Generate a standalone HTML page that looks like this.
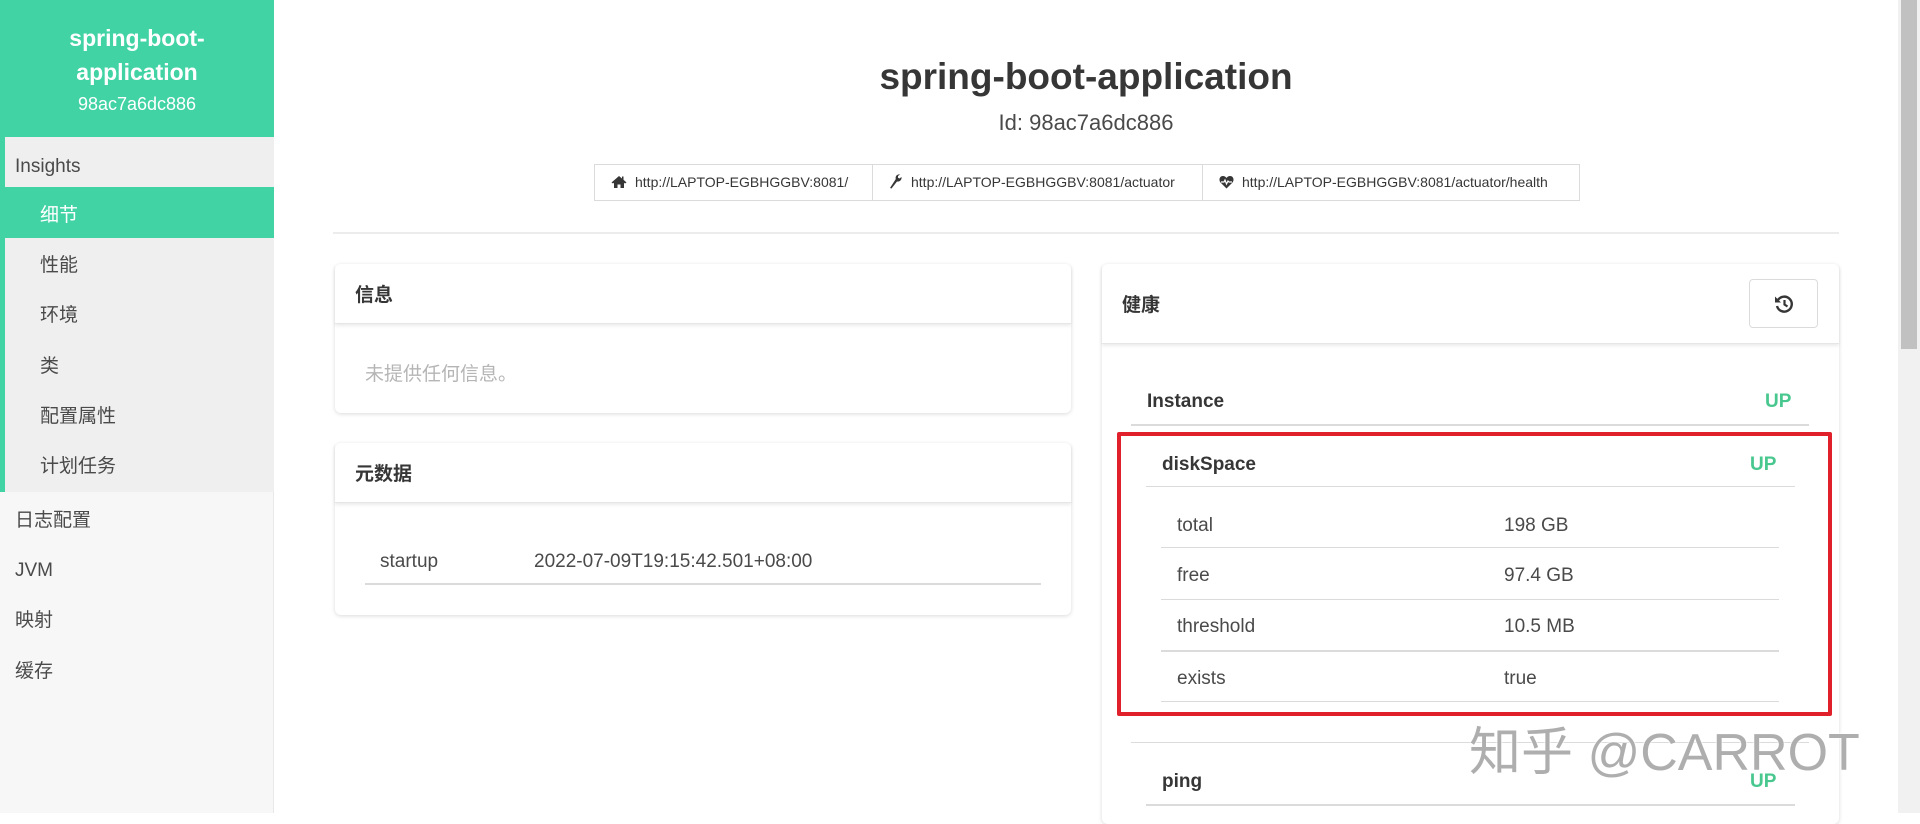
<!DOCTYPE html>
<html><head><meta charset="utf-8"><style>
*{margin:0;padding:0;box-sizing:border-box}
body{width:1920px;height:813px;overflow:hidden;background:#fff;font-family:"Liberation Sans","Noto Sans CJK SC",sans-serif;color:#363636;position:relative}
.a{position:absolute}
.sb{left:0;top:0;width:274px;height:813px;background:#f7f7f7;border-right:1px solid #e8e8e8}
.hd{left:0;top:0;width:274px;height:137px;background:#42d3a5;color:#fff;text-align:center}
.nav{font-size:19px;color:#4a4a4a;line-height:50px}
.card{background:#fff;border-radius:6px;box-shadow:0 1px 4px rgba(10,10,10,.15)}
.ch{border-bottom:1px solid #e6e6e6;box-shadow:0 2px 3px rgba(10,10,10,.08);font-weight:bold;font-size:19px;color:#363636}
.ln{height:1px;background:#dbdbdb}
.t{font-size:19px;color:#4a4a4a}
.up{color:#48c78e;font-weight:bold;font-size:19px}
.btn{top:164px;height:37px;border:1px solid #dbdbdb;font-size:14px;color:#363636;line-height:35px;padding-left:16px;background:#fff}
.btn svg{vertical-align:-2px;margin-right:8px}
</style></head><body>
<div class="a sb"></div>
<div class="a hd">
 <div class="a" style="left:0;width:274px;top:21px;font-size:23px;font-weight:bold;line-height:34px">spring-boot-<br>application</div>
 <div class="a" style="left:0;width:274px;top:94px;font-size:18px">98ac7a6dc886</div>
</div>
<div class="a" style="left:0;top:137px;width:274px;height:355px;background:#efefef"></div>
<div class="a" style="left:0;top:137px;width:5px;height:355px;background:#42d3a5"></div>
<div class="a" style="left:0;top:187px;width:274px;height:51px;background:#42d3a5"></div>
<div class="a nav" style="left:15px;top:142px">Insights</div>
<div class="a nav" style="left:40px;top:191px;color:#fff">细节</div>
<div class="a nav" style="left:40px;top:241px">性能</div>
<div class="a nav" style="left:40px;top:291px">环境</div>
<div class="a nav" style="left:40px;top:342px">类</div>
<div class="a nav" style="left:40px;top:392px">配置属性</div>
<div class="a nav" style="left:40px;top:442px">计划任务</div>
<div class="a nav" style="left:15px;top:496px">日志配置</div>
<div class="a nav" style="left:15px;top:546px">JVM</div>
<div class="a nav" style="left:15px;top:596px">映射</div>
<div class="a nav" style="left:15px;top:647px">缓存</div>

<div class="a" style="left:274px;width:1624px;top:56px;text-align:center;font-size:37px;font-weight:bold;color:#363636">spring-boot-application</div>
<div class="a" style="left:274px;width:1624px;top:110px;text-align:center;font-size:22px;color:#4a4a4a">Id: 98ac7a6dc886</div>

<div class="a btn" style="left:594px;width:279px"><svg width="16" height="14" viewBox="0 0 16 14"><path d="M8 1 L0.5 7.5 L2 8.5 L3 7.7 V13 H6.5 V9.5 H9.5 V13 H13 V7.7 L14 8.5 L15.5 7.5 L12.5 4.8 V1.5 H11 V3.5 Z" fill="#363636"/></svg>http://LAPTOP-EGBHGGBV:8081/</div>
<div class="a btn" style="left:872px;width:331px"><svg width="14" height="15" viewBox="0 0 14 15"><path d="M1 14 L2.5 14.5 L8 7.5 C10.5 8 13 6 12.5 3 L10.5 4.5 L9 3.8 L9 2 L11 0.5 C8 0 6 2.5 6.8 5 Z" fill="#363636"/></svg>http://LAPTOP-EGBHGGBV:8081/actuator</div>
<div class="a btn" style="left:1202px;width:378px"><svg width="15" height="14" viewBox="0 0 15 14"><path d="M7.5 13.5 L1.5 7.5 C-0.5 5 0.5 1 4 1 C5.6 1 6.8 2 7.5 3 C8.2 2 9.4 1 11 1 C14.5 1 15.5 5 13.5 7.5 Z" fill="#363636"/><path d="M2 7 H5 L6 5 L7.5 9 L9 6 L10 7 H13" stroke="#fff" stroke-width="1.2" fill="none"/></svg>http://LAPTOP-EGBHGGBV:8081/actuator/health</div>
<div class="a ln" style="left:333px;top:232px;width:1506px;background:#ececec;height:2px"></div>

<div class="a card" style="left:335px;top:264px;width:736px;height:149px">
 <div class="ch" style="height:60px;line-height:64px;padding-left:20px">信息</div>
 <div class="a" style="left:30px;top:95px;font-size:19px;color:#b5b5b5">未提供任何信息。</div>
</div>
<div class="a card" style="left:335px;top:443px;width:736px;height:172px">
 <div class="ch" style="height:60px;line-height:64px;padding-left:20px">元数据</div>
 <div class="a t" style="left:45px;top:108px">startup</div>
 <div class="a t" style="left:199px;top:108px">2022-07-09T19:15:42.501+08:00</div>
 <div class="a ln" style="left:30px;top:140px;width:676px;height:2px"></div>
</div>

<div class="a card" style="left:1102px;top:264px;width:737px;height:560px">
 <div class="ch" style="height:80px;line-height:84px;padding-left:20px">健康</div>
 <div class="a" style="left:647px;top:15px;width:69px;height:49px;border:1px solid #dbdbdb;border-radius:4px;text-align:center;padding-top:14px"><svg width="20" height="20" viewBox="0 0 20 20"><path d="M4 6 A7.5 7.5 0 1 1 3 12" stroke="#363636" stroke-width="2.4" fill="none"/><path d="M1 2.5 V8.5 H7 Z" fill="#363636"/><path d="M10.5 6 V10.5 L13.5 12.5" stroke="#363636" stroke-width="2.2" fill="none"/></svg></div>
</div>
<div class="a t" style="left:1147px;top:391px;font-weight:bold;color:#363636">Instance</div>
<div class="a up" style="left:1765px;top:391px">UP</div>
<div class="a ln" style="left:1131px;top:424px;width:678px;height:2px"></div>
<div class="a t" style="left:1162px;top:454px;font-weight:bold;color:#363636">diskSpace</div>
<div class="a up" style="left:1750px;top:454px">UP</div>
<div class="a ln" style="left:1146px;top:486px;width:649px"></div>
<div class="a t" style="left:1177px;top:515px">total</div><div class="a t" style="left:1504px;top:515px">198 GB</div>
<div class="a ln" style="left:1161px;top:547px;width:618px"></div>
<div class="a t" style="left:1177px;top:565px">free</div><div class="a t" style="left:1504px;top:565px">97.4 GB</div>
<div class="a ln" style="left:1161px;top:599px;width:618px"></div>
<div class="a t" style="left:1177px;top:616px">threshold</div><div class="a t" style="left:1504px;top:616px">10.5 MB</div>
<div class="a ln" style="left:1161px;top:650px;width:618px;height:2px"></div>
<div class="a t" style="left:1177px;top:668px">exists</div><div class="a t" style="left:1504px;top:668px">true</div>
<div class="a ln" style="left:1161px;top:701px;width:618px"></div>
<div class="a ln" style="left:1131px;top:742px;width:678px"></div>
<div class="a t" style="left:1162px;top:771px;font-weight:bold;color:#363636">ping</div>
<div class="a up" style="left:1750px;top:771px">UP</div>
<div class="a ln" style="left:1146px;top:804px;width:649px;height:2px"></div>
<div class="a" style="left:1117px;top:432px;width:715px;height:284px;border:4px solid #e0202a;border-radius:2px"></div>
<div class="a" style="left:1469px;top:710px;font-size:52px;color:rgba(140,140,140,.7);text-shadow:0 0 2px #fff,0 0 2px #fff">知乎 @CARROT</div>

<div class="a" style="left:1898px;top:0;width:22px;height:813px;background:#f1f1f1"></div>
<div class="a" style="left:1901px;top:0;width:16px;height:349px;background:#c1c1c1"></div>
</body></html>
